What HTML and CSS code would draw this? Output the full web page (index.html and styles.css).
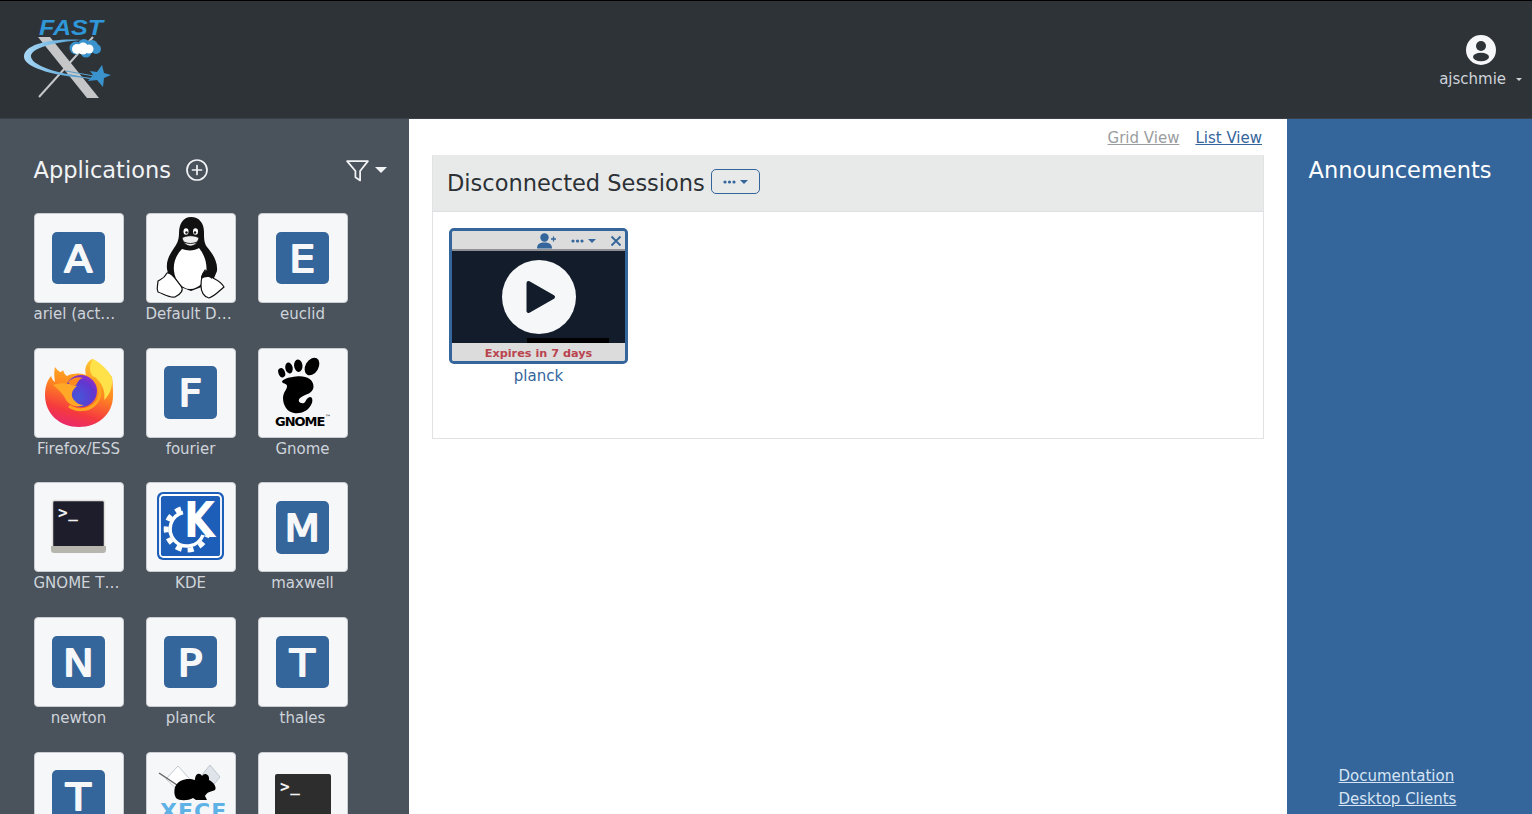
FILE: index.html
```html
<!DOCTYPE html>
<html lang="en">
<head>
<meta charset="utf-8">
<title>FastX</title>
<link rel="stylesheet" href="styles.css">
</head>
<body>
<div class="app">
  <header class="topbar">
    <svg class="logo" viewBox="20 15 95 85" width="95" height="85">
      <defs><linearGradient id="orbit" x1="0" x2="1" y1="0" y2="0"><stop offset="0" stop-color="#a9d8f5"/><stop offset="1" stop-color="#3a93cc"/></linearGradient></defs>
      <text class="logo-text" x="39" y="35" textLength="64" lengthAdjust="spacingAndGlyphs">FAST</text>
      <polygon points="38,37 50,37 99,98 87,98" fill="#c4c6c8"/>
      <line x1="93" y1="37" x2="39" y2="97" stroke="#c4c6c8" stroke-width="2"/>
      <path d="M82 40C52 38 24 44 24 57C24 68 60 78 93 78C64 75 33 67 31 57C30 48 54 42 82 40Z" fill="url(#orbit)"/>
      <path d="M66 71L94 76M70 75L92 79" stroke="#5a9fcb" stroke-width="1"/>
      <g fill="#3a93cc"><circle cx="76" cy="48" r="6.500"/><circle cx="84" cy="45" r="6"/><circle cx="92" cy="46" r="6"/><circle cx="96" cy="49" r="5"/><circle cx="86" cy="52" r="5.500"/></g>
      <g fill="#fff"><circle cx="77" cy="49" r="5"/><circle cx="83" cy="47.500" r="5"/><circle cx="89" cy="49" r="4.500"/><circle cx="83" cy="50" r="4.500"/></g>
      <polygon points="102,65 104,73 111,75 104,78 103,87 97,80 88,81 93,75 90,71 97,72" fill="#3a93cc"/>
    </svg>
    <div class="user">
      <svg class="user-icon" viewBox="0 0 30 30" width="30" height="30">
        <circle cx="15" cy="15" r="15" fill="#f6f7f9"/>
        <circle cx="15" cy="11" r="5" fill="#2e3338"/>
        <ellipse cx="15" cy="22" rx="8" ry="4.200" fill="#2e3338"/>
      </svg>
      <div class="user-name">ajschmie <span class="caret caret-user"></span></div>
    </div>
  </header>
  <div class="workspace">
    <aside class="apps">
      <div class="apps-head">
        <h2 class="apps-title">Applications</h2>
        <svg class="plus" viewBox="0 0 24 24" width="24" height="24"><circle cx="12" cy="12" r="10" fill="none" stroke="#f1f3f5" stroke-width="1.700"/><path d="M12 7.500V16.500M7.500 12H16.500" stroke="#f1f3f5" stroke-width="1.700" stroke-linecap="round"/></svg>
        <div class="filter">
          <svg viewBox="0 0 24 24" width="25" height="25"><path d="M2 3H22L14.500 12.500V21.500L10 18.500V12.500Z" fill="none" stroke="#f1f3f5" stroke-width="1.700" stroke-linejoin="round"/></svg>
          <span class="caret caret-filter"></span>
        </div>
      </div>
      <div class="app-grid">
        <div class="app-item"><div class="tile"><svg class="letter" viewBox="0 0 52.500 52.500"><text x="26.250" y="40">A</text></svg></div><div class="app-name clipped">ariel (act…</div></div>
        <div class="app-item"><div class="tile">
          <svg class="art" viewBox="0 0 90 90">
            <path d="M45 4C37 4 33 11 33 20C33 27 31 31 28 35C24 41 20 47 21 56L24 70L45 78L66 70L71 58C72 48 66 40 61 34C58 30 58 25 58 19C58 10 53 4 45 4Z" fill="#111"/>
            <path d="M36 36C30 42 27 50 28 58C29 68 36 76 44 76C53 76 60 68 60.500 58C61 49 58 41 53 35C49 38 41 38 36 36Z" fill="#fff"/>
            <path d="M36 25C40 22 49 22 53 25C51 31 48 33 44.500 33C41 33 38 31 36 25Z" fill="#eee" stroke="#111" stroke-width="0.800"/>
            <path d="M38 29C42 31 47 31 51 29" fill="none" stroke="#111" stroke-width="0.900"/>
            <ellipse cx="40" cy="18.500" rx="2.500" ry="3.300" fill="#fff"/><ellipse cx="49.500" cy="18.500" rx="2.500" ry="3.300" fill="#fff"/>
            <circle cx="40.500" cy="19.500" r="1.200" fill="#111"/><circle cx="49" cy="19.500" r="1.200" fill="#111"/>
            <path d="M21 60C26 59 30 67 35 73C38 77 35 81 29 84C23 85 18 81 12 79C10 75 12 72 12 68C15 66 18 66 21 60Z" fill="#fff" stroke="#111" stroke-width="1.200" stroke-linejoin="round"/>
            <path d="M59 57C63 57 65 62 67 65C71 67 76 70 78 74C73 78 69 83 63 85C58 84 55 79 55 73C55 67 56 61 59 57Z" fill="#fff" stroke="#111" stroke-width="1.200" stroke-linejoin="round"/>
            <path d="M55 66C55 60 59 57 62 58C66 59 67 63 66 66C63 63 59 64 55 66Z" fill="#111"/>
          </svg></div><div class="app-name clipped">Default D…</div></div>
        <div class="app-item"><div class="tile"><svg class="letter" viewBox="0 0 52.500 52.500"><text x="26.250" y="40">E</text></svg></div><div class="app-name">euclid</div></div>
        <div class="app-item"><div class="tile">
          <svg class="art" viewBox="0 0 90 90">
            <defs>
              <linearGradient id="ffa" x1="0.700" y1="0" x2="0.400" y2="1"><stop offset="0" stop-color="#ffc930"/><stop offset="0.450" stop-color="#ff8a1f"/><stop offset="0.800" stop-color="#f5393f"/><stop offset="1" stop-color="#e92a6c"/></linearGradient>
              <radialGradient id="ffb" cx="0.400" cy="0.700" r="0.800"><stop offset="0" stop-color="#4558d8"/><stop offset="0.650" stop-color="#6236cf"/><stop offset="1" stop-color="#a32cc4"/></radialGradient>
            </defs>
            <path d="M58 11C63 13 72 22 78 29C79 36 79 42 79 48C79 66 64 79 45 79C26 79 11 66 11 47C11 39 13 33 17 28C18 31 19 33 21 34C20 28 20 23 21 19C24 23 27 26 29 22C30 25 31 27 33 28C39 25 46 25 52 27C50 21 52 15 58 11Z" fill="url(#ffa)"/>
            <path d="M59 11C67 15 76 24 78 30C79 38 76 47 70 52C72 44 68 34 60 29C56 27 54 18 59 11Z" fill="#ffe14a"/>
            <path d="M60 30C68 38 68 50 60 57C53 63 42 63 35 58" fill="none" stroke="#ffa51f" stroke-width="3"/>
            <circle cx="47" cy="43" r="16" fill="url(#ffb)"/>
            <path d="M19 37C26 34 35 35 43 38C38 42 36 47 40 52C42 55 46 57 50 57C44 60 36 58 32 52C30 47 25 42 19 37Z" fill="#ffa726"/>
            <path d="M34 34C38 30 44 28 49 30C45 31 44 34 42 37C39 38 36 37 34 34Z" fill="#ff8a1f"/>
          </svg></div><div class="app-name">Firefox/ESS</div></div>
        <div class="app-item"><div class="tile"><svg class="letter" viewBox="0 0 52.500 52.500"><text x="26.250" y="40">F</text></svg></div><div class="app-name">fourier</div></div>
        <div class="app-item"><div class="tile">
          <svg class="art" viewBox="0 0 90 90">
            <ellipse cx="23.700" cy="24.700" rx="3.300" ry="4.800" transform="rotate(-20 23.700 24.700)" fill="#000"/>
            <ellipse cx="31" cy="20" rx="3.700" ry="5.500" transform="rotate(-12 31 20)" fill="#000"/>
            <ellipse cx="40.300" cy="17.700" rx="4.200" ry="6.200" transform="rotate(-5 40.300 17.700)" fill="#000"/>
            <ellipse cx="54" cy="18.500" rx="6.500" ry="9.500" transform="rotate(30 54 18.500)" fill="#000"/>
            <path d="M38 28.500C47 27 56 31 55.500 39C55 46 47 46 42 50C39 53 42 56 46 55C48 54 48 50 52 49C55 49 55 54 53 57C50 63 43 66 36 65C29 64 25 57 25 50C25 44 29 42 29 38C29 35 24 36 24 33.500C26 30 32 29.500 38 28.500Z" fill="#000"/>
            <text class="gnome" x="17" y="78">GNOME</text><text class="tm" x="67" y="71">™</text>
          </svg></div><div class="app-name">Gnome</div></div>
        <div class="app-item"><div class="tile">
          <svg class="art" viewBox="0 0 90 90">
            <rect x="18.500" y="18.500" width="52" height="47" rx="2" fill="#1e1d2b" stroke="#e2e0da" stroke-width="1.500"/>
            <path d="M17 64H72V68C72 70 71 71 69 71H20C18 71 17 70 17 68Z" fill="#b7b6ae"/>
            <text class="prompt" x="24" y="36">&gt;_</text>
          </svg></div><div class="app-name clipped">GNOME T…</div></div>
        <div class="app-item"><div class="tile">
          <svg class="art" viewBox="0 0 90 90">
            <rect x="11" y="10" width="67" height="68" rx="6" fill="#1d5fb8"/>
            <rect x="14" y="13" width="61" height="62" rx="3.500" fill="none" stroke="#fff" stroke-width="1.800"/>
            <path d="M37 30.500A17 17 0 1 0 57 53" fill="none" stroke="#fff" stroke-width="3.500"/>
            <path d="M35 27A21 21 0 1 0 61 54" fill="none" stroke="#fff" stroke-width="5" stroke-dasharray="6 6"/>
            <text class="kde" transform="translate(38 55) scale(0.800 1)">K</text>
          </svg></div><div class="app-name">KDE</div></div>
        <div class="app-item"><div class="tile"><svg class="letter" viewBox="0 0 52.500 52.500"><text x="26.250" y="40">M</text></svg></div><div class="app-name">maxwell</div></div>
        <div class="app-item"><div class="tile"><svg class="letter" viewBox="0 0 52.500 52.500"><text x="26.250" y="40">N</text></svg></div><div class="app-name">newton</div></div>
        <div class="app-item"><div class="tile"><svg class="letter" viewBox="0 0 52.500 52.500"><text x="26.250" y="40">P</text></svg></div><div class="app-name">planck</div></div>
        <div class="app-item"><div class="tile"><svg class="letter" viewBox="0 0 52.500 52.500"><text x="26.250" y="40">T</text></svg></div><div class="app-name">thales</div></div>
        <div class="app-item"><div class="tile"><svg class="letter" viewBox="0 0 52.500 52.500"><text x="26.250" y="40">T</text></svg></div></div>
        <div class="app-item"><div class="tile">
          <svg class="art" viewBox="0 0 90 90">
            <polygon points="20,27 32,14 50,34 38,44" fill="#fff" stroke="#b5bcc4" stroke-width="0.800"/>
            <polygon points="50,30 64,13 74,25 60,42" fill="#dfe4ea" stroke="#b5bcc4" stroke-width="0.800"/>
            <path d="M13 21L31 33" stroke="#666" stroke-width="1.500"/>
            <path d="M29 35C33 26 44 26 49 28C49 21 54 20 56 24C58 20 64 22 63 28C68 30 71 36 69 38C64 40 61 40 59 44L61 48H50L47 46C42 49 33 49 30 46C28 43 28 39 29 35Z" fill="#000"/>
            <text class="xfce" x="14" y="67">XFCE</text>
          </svg></div></div>
        <div class="app-item"><div class="tile">
          <svg class="art" viewBox="0 0 90 90">
            <rect x="17" y="22" width="56" height="68" rx="2" fill="#2d2d2d"/>
            <text class="prompt" x="22" y="40">&gt;_</text>
          </svg></div></div>
      </div>
    </aside>
    <main class="content">
      <nav class="views"><a class="view-off">Grid View</a><a class="view-on">List View</a></nav>
      <section class="panel">
        <div class="panel-head">
          <h2 class="panel-title">Disconnected Sessions</h2>
          <button class="more-btn">
            <svg class="dots" viewBox="0 0 13 4" width="13" height="4"><circle cx="2" cy="2" r="1.600"/><circle cx="6.500" cy="2" r="1.600"/><circle cx="11" cy="2" r="1.600"/></svg>
            <span class="caret caret-btn"></span>
          </button>
        </div>
        <div class="panel-body">
          <div class="session">
            <div class="session-card">
              <div class="session-bar">
                <svg viewBox="0 0 20 16" width="20" height="16" class="add-user"><circle cx="7.500" cy="4.500" r="4.200" fill="#34659b"/><path d="M0 15.500C0 11 3 9.500 7.500 9.500C12 9.500 15 11 15 15.500Z" fill="#34659b"/><path d="M16.500 3.500V8.500M14 6H19" stroke="#34659b" stroke-width="1.300"/></svg>
                <svg class="dots" viewBox="0 0 13 4" width="13" height="4"><circle cx="2" cy="2" r="1.600"/><circle cx="6.500" cy="2" r="1.600"/><circle cx="11" cy="2" r="1.600"/></svg>
                <span class="caret caret-bar"></span>
                <svg viewBox="0 0 12 12" width="12" height="12" class="close-x"><path d="M1.500 1.500L10.500 10.500M10.500 1.500L1.500 10.500" stroke="#34659b" stroke-width="1.800"/></svg>
              </div>
              <div class="session-screen">
                <div class="play"><svg viewBox="0 0 30 34" width="30" height="34"><path d="M2.500 3L27 17L2.500 31Z" fill="#121c2b" stroke="#121c2b" stroke-width="4" stroke-linejoin="round"/></svg></div>
                <div class="strip"></div>
              </div>
              <div class="session-foot">Expires in 7 days</div>
            </div>
            <div class="session-name">planck</div>
          </div>
        </div>
      </section>
    </main>
    <aside class="news">
      <h2 class="news-title">Announcements</h2>
      <div class="news-links"><a>Documentation</a><a>Desktop Clients</a></div>
    </aside>
  </div>
</div>
</body>
</html>
```
FILE: styles.css
```css
* { box-sizing: border-box; }
html, body { margin: 0; height: 100%; overflow: hidden; }
body { font-family: "DejaVu Sans", sans-serif; font-size: 15px; line-height: 22.5px; color: #212529; background: #fff; }
h2 { margin: 0; font-weight: 400; }
a { cursor: pointer; text-decoration: underline; }
.app { display: flex; flex-direction: column; height: 814px; }
.topbar { flex: 0 0 119px; display: flex; justify-content: space-between; background: #2e3338; border-top: 1px solid #000; border-bottom: 1px solid #3b4148; }
.logo { margin: 14px 0 0 20px; }
.logo-text { font: italic 700 22px "Liberation Sans", sans-serif; fill: #2f97d8; }
.user { display: flex; flex-direction: column; align-items: center; width: 93px; margin-right: 5px; padding-top: 34px; }
.user-name { color: #ced4da; margin-top: 3px; white-space: nowrap; }
.caret { display: inline-block; width: 0; height: 0; border-style: solid; border-color: currentColor transparent transparent; }
.caret-user { border-width: 3.500px 3.500px 0; margin-left: 5px; vertical-align: 3px; }
.workspace { flex: 1; min-height: 0; display: flex; overflow: hidden; }
.apps { flex: 0 0 409px; background: #4a525c; padding: 36px 22px 0 33.500px; overflow: hidden; }
.apps-head { display: flex; align-items: center; height: 30px; margin-bottom: 28px; color: #f1f3f5; }
.apps-title { font-size: 22.500px; line-height: 30px; }
.plus { margin-left: 14.500px; }
.filter { margin-left: auto; display: flex; align-items: center; }
.caret-filter { border-width: 6px 6.500px 0; margin-left: 5px; }
.app-grid { display: grid; grid-template-columns: repeat(3, 90px); grid-auto-rows: 134.670px; column-gap: 22px; }
.tile { position: relative; width: 90px; height: 90px; display: flex; align-items: center; justify-content: center; background: #f6f7f9; border: 1px solid #c9cdd2; border-radius: 4px; overflow: hidden; }
.letter { width: 52.500px; height: 52.500px; background: #34659b; border-radius: 5px; }
.letter text { font: 400 38px "DejaVu Sans", sans-serif; fill: #f6f7f9; stroke: #f6f7f9; stroke-width: 1.800px; stroke-linejoin: round; text-anchor: middle; transform-box: fill-box; transform-origin: center; transform: scaleX(1.080); }
.art { position: absolute; left: -1px; top: -1px; width: 90px; height: 90px; }
.app-name { width: 90px; color: #ced4da; text-align: center; white-space: nowrap; }
.clipped { text-align: left; }
.gnome { font: 700 13px "DejaVu Sans", sans-serif; fill: #000; letter-spacing: -1px; }
.tm { font: 6px "DejaVu Sans", sans-serif; fill: #000; }
.prompt { font: 700 16px "DejaVu Sans Mono", monospace; letter-spacing: 0.500px; fill: #f2f2f2; }
.kde { font: 700 50px "DejaVu Sans", sans-serif; fill: #fff; }
.xfce { font: 700 22px "DejaVu Sans", sans-serif; fill: #5fb2e6; letter-spacing: 1px; }
.content { flex: 1; min-width: 0; padding: 8px 23px 0; }
.views { display: flex; justify-content: flex-end; gap: 16px; height: 28px; padding-right: 2px; font-size: 15px; }
.view-off { color: #9a9d9f; }
.view-on { color: #34659b; }
.panel { border: 1px solid #e0e2e4; border-top: 0; height: 284px; }
.panel-head { display: flex; align-items: center; height: 57px; padding: 0 14px; background: #e8eaea; border-bottom: 1px solid #dde0e3; }
.panel-title { font-size: 22.500px; line-height: 30px; color: #2c3136; }
.more-btn { display: flex; align-items: center; justify-content: center; gap: 4px; width: 49px; height: 25px; margin: -3px 0 0 6px; padding: 0; background: transparent; border: 1px solid #34659b; border-radius: 5px; color: #34659b; }
.dots { fill: #34659b; }
.caret-btn { border-width: 4px 4px 0; }
.panel-body { padding: 16px; }
.session { width: 179px; }
.session-card { width: 179px; height: 136px; display: flex; flex-direction: column; border: 3px solid #34659b; border-radius: 5px; background: #dcdcdc; overflow: hidden; }
.session-bar { flex: 0 0 20px; display: flex; align-items: center; color: #34659b; background: #dcdcdc; border-bottom: 2px solid #8e9094; padding: 2px 0 0 85px; }
.add-user { margin-right: 14px; }
.caret-bar { border-width: 4px 4px 0; margin-left: 4px; }
.close-x { margin-left: 14px; }
.session-screen { position: relative; flex: 0 0 92px; display: flex; align-items: center; justify-content: center; background: #121c2b; }
.play { width: 74px; height: 74px; display: flex; align-items: center; justify-content: center; padding-left: 4px; background: #f6f7f9; border-radius: 50%; }
.strip { position: absolute; left: 75px; bottom: 0; width: 82px; height: 5px; background: #000; }
.session-foot { flex: 0 0 18px; text-align: center; font-size: 11.250px; line-height: 21px; font-weight: 700; color: #b9444e; background: #dcdcdc; }
.session-name { text-align: center; color: #34659b; margin-top: 0.500px; }
.news { flex: 0 0 245px; display: flex; flex-direction: column; background: #34659b; padding: 36px 0 4px 21.500px; color: #fff; }
.news-title { font-size: 22.500px; line-height: 30px; }
.news-links { margin-top: auto; display: flex; flex-direction: column; align-items: flex-start; padding-left: 30px; color: #d6e4f3; }
```
